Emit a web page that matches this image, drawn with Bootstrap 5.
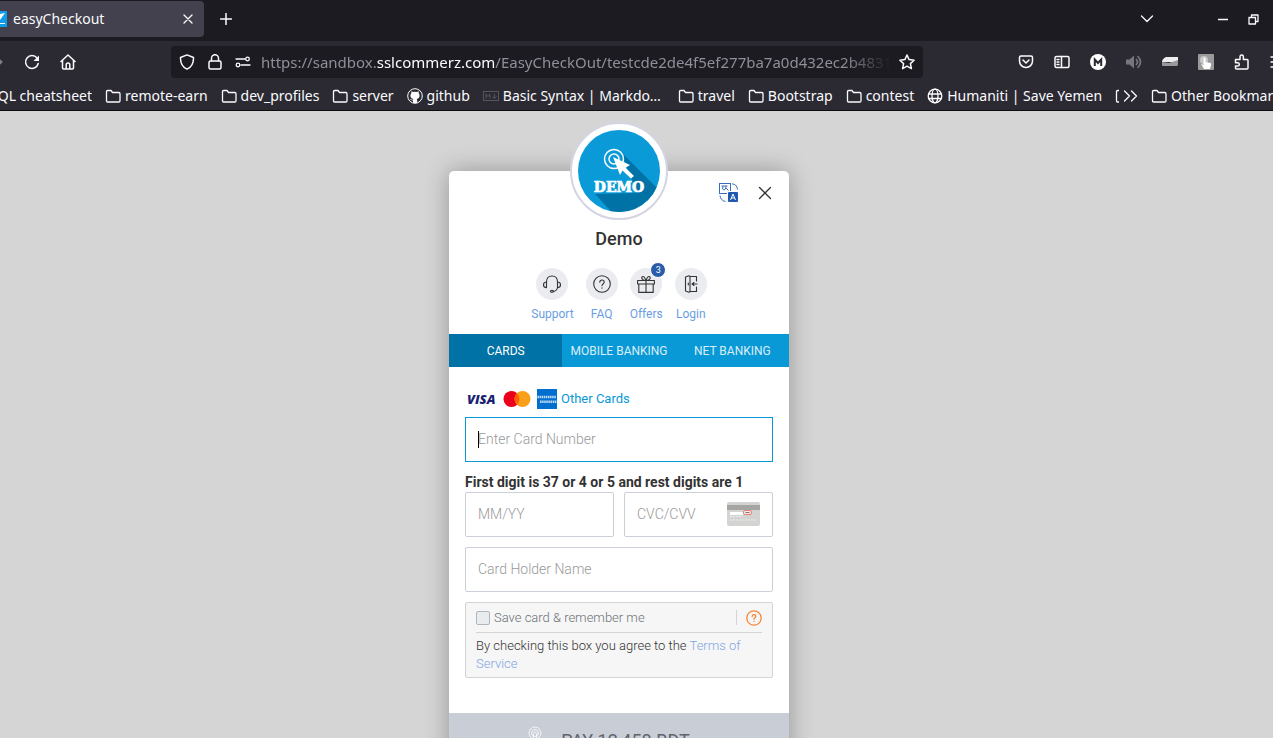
<!DOCTYPE html>
<html lang="en">
<head>
<meta charset="utf-8">
<meta name="viewport" content="width=device-width, initial-scale=1">
<title>easyCheckout</title>
<link href="https://cdn.jsdelivr.net/npm/bootstrap@5.3.0/dist/css/bootstrap.min.css" rel="stylesheet">
<style>
  body { font-family: Roboto, "Liberation Sans", sans-serif; background: #d5d5d5; color: #333; }
  svg { display: block; flex: none; }
  .ico { fill: none; stroke: currentColor; stroke-width: 1.3; stroke-linecap: round; stroke-linejoin: round; }
  .ico.firm { stroke-width: 1.5; }
  .ico.fine { stroke-width: 1.1; }
  .bare { background: none; border: 0; padding: 0; color: inherit; }

  /* browser frame */
  .browser { font-family: "Noto Sans", "Open Sans", sans-serif; font-size: 14px; line-height: 20px; color: #fbfbfe; background: #2b2a33; border-bottom: 1px solid #0c0c0d; }
  .tabstrip { background: #1c1b22; height: 41px; padding-bottom: 3px; }
  .pagetab { width: 204px; height: 36px; background: #42414d; border-radius: 0 4px 4px 0; padding-right: 10px; }
  .pagetab span { margin-left: 6px; }
  .winctl { padding-right: 14px; }
  .toolbar { height: 41px; }
  .tool { width: 36px; height: 32px; display: flex; align-items: center; justify-content: center; }
  .tools-start { width: 86px; }
  .tools-end { width: 265px; }
  .spacer { width: 85px; }
  .urlbar { height: 32px; background: #1c1b22; border-radius: 4px; padding: 0 8px; }
  .address { font-size: 15px; color: #8f8f9a; padding-left: 2px; -webkit-mask-image: linear-gradient(to left, transparent, #000 48px); mask-image: linear-gradient(to left, transparent, #000 48px); }
  .address b { font-weight: 400; color: #fbfbfe; }
  .bookmarks { height: 28px; gap: 13px; }
  .bookmarks a { color: inherit; text-decoration: none; display: flex; align-items: center; gap: 4px; flex: none; }
  .bookmarks .first { width: 92px; justify-content: flex-end; overflow: hidden; }
  .bookmarks .long { width: 182px; }
  .bookmarks .cut { width: 4px; overflow: hidden; }

  /* checkout */
  .stage { padding: 60px 35px 0 0; }
  .checkout { width: 340px; border-radius: 5px 5px 0 0; box-shadow: 0 0 24px rgba(0,0,0,.3); }
  .merchant { width: 98px; height: 98px; margin-top: -49px; padding: 6px; border: 2px solid #d3d5e2; }
  .corner { top: 12px; right: 15px; gap: 17px; }
  .shop-name { font-size: 18px; line-height: 24px; font-weight: 500; margin: 7px 0 17px; }
  .helplinks { gap: 12px; font-size: 12px; line-height: 16px; }
  .helplinks a { color: #6a9ee2; text-decoration: none; }
  .disc { width: 32px; height: 32px; background: #ebecf0; color: #333; margin-bottom: 6px; }
  .count { top: -6px; right: -4px; width: 16px; height: 16px; background: #2a5caa; border: 1px solid #fff; color: #fff; font-size: 9px; line-height: 14px; }
  .paytabs { margin-top: 12px; background: #0999d6; font-size: 12px; line-height: 32px; }
  .paytabs button { flex: 1 1 0; height: 33px; padding-top: 1px; color: #d9eef8; white-space: nowrap; }
  .paytabs .current { background: #0072a5; color: #fff; }
  .payform { padding: 22px 16px 35px; }
  .brands { height: 20px; font-size: 13px; margin-bottom: 8px; }
  .brands a { color: #0999d6; text-decoration: none; margin-left: 4px; }
  .payform .field { height: 45px; border: 1px solid #cbd0d8; border-radius: 2px; padding: 0 12px 2px; font-size: 14px; font-weight: 300; }
  .payform .field:focus { box-shadow: none; border-color: #0999d6; }
  .payform .field::placeholder { color: #999; opacity: 1; }
  .payform .lit { border-color: #0999d6; border-radius: 0; }
  .payform .holder { margin: 10px 0; }
  .caret { left: 13px; top: 14px; width: 1px; height: 17px; background: #000; }
  .halves { display: grid; grid-template-columns: 1fr 1fr; gap: 10px; }
  .cvvpic { right: 13px; top: 10px; }
  .hint { font-size: 14px; line-height: 20px; font-weight: 700; margin-top: 10px; }
  .save { background: #f6f6f6; border: 1px solid #d4d4d4; border-radius: 2px; padding: 0 10px 4px; font-size: 13px; line-height: 18px; font-weight: 300; }
  .save-top { height: 30px; border-bottom: 1px solid #d4d4d4; margin-bottom: 4px; }
  .save-top label { color: #6c7278; margin-left: 4px; }
  .save .form-check-input { width: 14px; height: 14px; margin: 0; background-color: #e9ecef; border-color: #adb5bd; border-radius: 2px; }
  .divide { width: 1px; height: 15px; background: #d4d4d4; margin-right: 9px; }
  .save a { color: #7fa6e3; text-decoration: none; }
  .pay { height: 54px; background: #c9cdd5; color: #5f646b; font-size: 18px; padding-right: 20px; }
</style>
</head>
<body class="vh-100 overflow-hidden d-flex flex-column">
<header class="browser flex-shrink-0 overflow-hidden">
  <div class="tabstrip d-flex align-items-center">
    <div class="pagetab d-flex align-items-center flex-shrink-0">
      <svg width="7" height="16"><path fill="#0d9bea" d="M0 0h7v16H0z"/><path fill="#fff" d="M0 3l5-1-5 7zM0 12h5v1H0z"/></svg>
      <span class="flex-grow-1">easyCheckout</span>
      <button class="bare" aria-label="Close tab"><svg class="ico" width="12" height="12"><path d="M2 2l8 8M10 2l-8 8"/></svg></button>
    </div>
    <button class="bare ms-3" aria-label="New tab"><svg class="ico firm" width="12" height="12"><path d="M6 .5v11M.5 6h11"/></svg></button>
    <div class="winctl ms-auto d-flex align-items-center">
      <button class="bare me-5" aria-label="List tabs"><svg class="ico" width="14" height="10"><path d="M1.500 2l5.500 5.500L12.500 2"/></svg></button>
      <button class="bare ms-3" aria-label="Minimize"><svg class="ico" width="10" height="10"><path d="M0 5.500h10"/></svg></button>
      <button class="bare ms-3 ps-1" aria-label="Restore"><svg class="ico" width="11" height="11"><path d="M1 3.500h6.500V10H1zM3.500 3V1H10v6.500H8"/></svg></button>
    </div>
  </div>

  <div class="toolbar d-flex align-items-center">
    <div class="tools-start d-flex justify-content-end overflow-hidden flex-shrink-0">
      <button class="bare tool flex-shrink-0" aria-label="Forward"><svg class="ico" width="16" height="16" opacity=".4"><path d="M2 8h12M9 3.500L14 8l-5 4.500"/></svg></button>
      <button class="bare tool flex-shrink-0" aria-label="Reload"><svg class="ico firm" width="16" height="16"><path d="M14.200 9.500A6.400 6.400 0 1 1 13 4"/><path d="M15 1.500V7H9.500z" fill="currentColor" stroke="none"/></svg></button>
      <button class="bare tool flex-shrink-0" aria-label="Home"><svg class="ico firm" width="16" height="16"><path d="M1 7.500L8 1l7 6.500M2.500 6.500V14q0 1 1 1h9q1 0 1-1V6.500M6.200 15v-4.200q0-1.800 1.800-1.800t1.800 1.800V15"/></svg></button>
    </div>
    <div class="spacer flex-shrink-0"></div>
    <div class="urlbar d-flex align-items-center flex-grow-1 overflow-hidden">
      <svg class="ico firm" width="16" height="16"><path d="M8 .9L14.500 3.500C14.700 9 12.500 13 8 15.200 3.500 13 1.300 9 1.500 3.500z"/></svg>
      <svg class="ico firm ms-2 me-2 px-1" width="24" height="16" viewBox="0 0 16 16"><rect x="2" y="7" width="12" height="8" rx="1.500"/><path d="M4.500 7V4.200a3.500 3.500 0 0 1 7 0V7"/></svg>
      <svg class="ico" width="16" height="16"><path d="M1 5h9M6 11h9"/><circle cx="12.500" cy="5" r="1.800"/><circle cx="3" cy="11" r="1.800"/></svg>
      <div class="address ms-2 me-2 flex-grow-1 text-nowrap overflow-hidden">https://sandbox.<b>sslcommerz.com</b>/EasyCheckOut/testcde2de4f5ef277ba7a0d432ec2b4831</div>
      <svg class="ico firm" width="16" height="16"><path d="M8 1l2.100 4.600 5 .6-3.700 3.400 1 5L8 12.200 3.600 14.600l1-5L.9 6.200l5-.6z"/></svg>
    </div>
    <div class="spacer flex-shrink-0"></div>
    <div class="tools-end d-flex overflow-hidden flex-shrink-0">
      <button class="bare tool flex-shrink-0" aria-label="Pocket"><svg class="ico firm" width="16" height="16"><path d="M3 2h10q1.500 0 1.500 1.500v3.500a6.500 6.500 0 0 1-13 0V3.500Q1.500 2 3 2zM5 6l3 3 3-3"/></svg></button>
      <button class="bare tool flex-shrink-0" aria-label="Sidebar"><svg class="ico firm" width="16" height="16"><rect x="1" y="2.500" width="14" height="11" rx="1.500"/><path d="M7.500 2.500v11M3 5.500h2M3 8h2M3 10.500h2"/></svg></button>
      <button class="bare tool flex-shrink-0" aria-label="Mail"><svg width="16" height="16"><circle cx="8" cy="8" r="8" fill="#fff"/><path fill="none" stroke="#2b2a33" stroke-width="2" d="M4.800 12V5.500L8 9l3.200-3.500V12"/></svg></button>
      <button class="bare tool flex-shrink-0" aria-label="Sound"><svg width="18" height="16" fill="#77767c"><path d="M1 5.500h3.500L9 1.500v13l-4.500-4H1z"/><path d="M11 5q3 3 0 6M12.500 2q6 6 0 12" fill="none" stroke="#77767c" stroke-width="1.700"/></svg></button>
      <button class="bare tool flex-shrink-0" aria-label="Eraser"><svg width="16" height="16"><path fill="#eee" d="M4 3h12v5H0q0-3 4-5z"/><path fill="#999" d="M0 8l7 1 9-3v4q0 2-1 2H1q-1 0-1-1z"/></svg></button>
      <button class="bare tool flex-shrink-0" aria-label="Touch"><svg width="16" height="16"><rect width="16" height="16" rx="1" fill="#9a9a9a"/><circle cx="6" cy="6" r="4" fill="#c8c8c8"/><path fill="#fff" d="M5.500 4q1-1 2 0v4l5 1q1 .5.500 2l-1 4H6l-3-5 2.500 1z"/></svg></button>
      <button class="bare tool flex-shrink-0" aria-label="Extensions"><svg class="ico firm" width="16" height="16"><path d="M1.500 5.500H6V2.700a1.700 1.700 0 0 1 3.400 0v2.800h3.800q.8 0 .8.800V14q0 1-1 1H2.500q-1 0-1-1v-2h2.200a1.600 1.600 0 0 0 0-3.200H1.500z"/></svg></button>
      <button class="bare tool flex-shrink-0" aria-label="Menu"><svg class="ico" width="16" height="16"><path d="M1 3h14M1 8h14M1 13h14"/></svg></button>
    </div>
  </div>

  <svg class="d-none"><symbol id="folder" viewBox="0 0 16 16"><path d="M1.500 12.800V3.700q0-1.200 1.200-1.200H6l1.500 2h6.300Q15 4.500 15 5.700v7.100q0 1.200-1.200 1.200H2.700q-1.200 0-1.200-1.200z"/></symbol></svg>
  <nav class="bookmarks d-flex align-items-center text-nowrap overflow-hidden" aria-label="Bookmarks">
    <a class="first" href="#">SQL cheatsheet</a>
    <a href="#"><svg class="ico" width="16" height="16"><use href="#folder"/></svg>remote-earn</a>
    <a href="#"><svg class="ico" width="16" height="16"><use href="#folder"/></svg>dev_profiles</a>
    <a href="#"><svg class="ico" width="16" height="16"><use href="#folder"/></svg>server</a>
    <a href="#"><svg width="16" height="16"><circle cx="8" cy="8" r="7.300" fill="#2b2a33" stroke="#fbfbfe"/><path fill="#fbfbfe" d="M6 15v-2.500c-2 .3-2.300-1-3-1.500 1.500-.2 1.500 1 3 .8l.3-.9C4 10.500 3.200 9 3.500 7q.1-1 .8-1.700V3.200L6.300 4q1.700-.4 3.400 0l2-.8v2.100q.7.700.8 1.700c.3 2-.5 3.500-2.800 3.900q.5.600.5 1.600V15z"/></svg>github</a>
    <a class="long" href="#"><svg width="16" height="16" fill="none" stroke="#55545c"><rect x=".5" y="3.500" width="15" height="9"/><path d="M3 10.500V6l2 2.500L7 6v4.500M11.500 6v4M9.500 8.500l2 2 2-2"/></svg><span class="text-truncate">Basic Syntax | Markdown Guide</span></a>
    <a href="#"><svg class="ico" width="16" height="16"><use href="#folder"/></svg>travel</a>
    <a href="#"><svg class="ico" width="16" height="16"><use href="#folder"/></svg>Bootstrap</a>
    <a href="#"><svg class="ico" width="16" height="16"><use href="#folder"/></svg>contest</a>
    <a href="#"><svg class="ico" width="16" height="16"><circle cx="8" cy="8" r="6.800"/><ellipse cx="8" cy="8" rx="3" ry="6.800"/><path d="M1.500 6h13M1.500 10.500h13"/></svg>Humaniti | Save Yemen</a>
    <div class="d-flex align-items-center gap-1">
      <a class="cut" href="#" aria-label="More"><svg class="ico" width="16" height="16"><use href="#folder"/></svg></a>
      <button class="bare" aria-label="Show more bookmarks"><svg class="ico" width="15" height="12"><path d="M1.500 1l5 5-5 5M8.500 1l5 5-5 5"/></svg></button>
    </div>
    <a href="#"><svg class="ico" width="16" height="16"><use href="#folder"/></svg>Other Bookmarks</a>
  </nav>
</header>

<main class="stage flex-grow-1 overflow-hidden">
  <div class="checkout bg-white mx-auto position-relative">
    <div class="corner position-absolute d-flex align-items-center">
      <button class="bare" aria-label="Language"><svg width="20" height="20" fill="none" stroke="#3b6db8"><rect x=".5" y=".5" width="11" height="10"/><path d="M2.500 3h6M4 3q-1.500 4 1 4 2 0 2-4M7 5l2.500 2.500M13 .8q5 .5 5.500 5.700M1 12.500q.5 5 5.500 6"/><rect x="8.500" y="8.500" width="11" height="11" rx="1.500" fill="#1f58ae" stroke="#fff"/><path stroke="#fff" d="M11.500 17l2.500-6 2.500 6M12.300 15h3.400"/></svg></button>
      <button class="bare" aria-label="Close"><svg class="ico" width="18" height="18"><path d="M3.500 3.500l11 11M14.500 3.500l-11 11"/></svg></button>
    </div>
    <div class="d-flex flex-column align-items-center">
      <div class="merchant bg-white rounded-circle">
        <svg width="82" height="82" viewBox="0 0 82 82">
          <clipPath id="round"><circle cx="41" cy="41" r="41"/></clipPath>
          <g clip-path="url(#round)">
            <path fill="#0a9ad7" d="M0 0h82v82H0z"/>
            <path fill="#0172a6" d="M43 22l43 43v25H41L17 64l42-1z"/>
            <circle cx="36" cy="29" r="9.500" fill="none" stroke="#fff" stroke-width="1.500"/>
            <circle cx="36" cy="29" r="5" fill="none" stroke="#fff" stroke-width="1.500"/>
            <path fill="#fff" d="M35 27l17 8-4.500 2.800 8.500 8.200-3 2.500-8.500-8L42 45z"/>
            <text x="41" y="62" text-anchor="middle" font-family="DejaVu Serif, serif" font-weight="700" font-size="14" fill="#fff" stroke="#fff" stroke-width=".7">DEMO</text>
          </g>
        </svg>
      </div>
      <h1 class="shop-name">Demo</h1>
      <div class="helplinks d-flex text-center">
        <a href="#" class="d-flex flex-column align-items-center"><span class="disc rounded-circle d-flex align-items-center justify-content-center"><svg class="ico fine" width="18" height="18"><path d="M3.500 7q0-6 5.500-6t5.500 6M3.500 7q-3 0-3 2.800t3 2.800zM14.500 7q3 0 3 2.800t-3 2.800zM14.500 12.500q-.5 3.500-4.500 4"/><ellipse cx="9" cy="16.300" rx="1.600" ry="1"/></svg></span>Support</a>
        <a href="#" class="d-flex flex-column align-items-center"><span class="disc rounded-circle d-flex align-items-center justify-content-center"><svg class="ico fine" width="18" height="18"><circle cx="9" cy="9" r="8.300"/><path d="M6.800 7.200Q6.800 5 9 5t2.200 2q0 1.200-1.200 2-1 .7-1 1.800M9 12.900v.3"/></svg></span>FAQ</a>
        <a href="#" class="d-flex flex-column align-items-center"><span class="disc rounded-circle d-flex align-items-center justify-content-center position-relative"><svg class="ico fine" width="18" height="18"><path d="M.6 5.500h16.800V9H.6zM1.800 9v8.400h14.400V9M9 5.500v12M9 5.500Q4 5 5 2q2-2 4 3.500Q11 0 13 2q1 3-4 3.500"/></svg><span class="count position-absolute rounded-circle">3</span></span>Offers</a>
        <a href="#" class="d-flex flex-column align-items-center"><span class="disc rounded-circle d-flex align-items-center justify-content-center"><svg class="ico fine" width="18" height="18"><path d="M3.500 2L7 .8q1 0 1 1v14.400q0 1-1 1L3.500 16zM8 1.500h6.500V6M8 16.500h6.500V12M10 9h5M12 7.500L10 9l2 1.500M6.300 8v2"/></svg></span>Login</a>
      </div>
    </div>
    <div class="paytabs d-flex">
      <button class="bare current">CARDS</button>
      <button class="bare">MOBILE BANKING</button>
      <button class="bare">NET BANKING</button>
    </div>
    <form class="payform">
      <div class="brands d-flex align-items-center">
        <svg width="92" height="20" viewBox="0 0 92 20" aria-label="Visa, Mastercard, American Express">
          <text x="2" y="15" font-family="Open Sans, sans-serif" font-weight="800" font-style="italic" font-size="13" fill="#1a1f71">VISA</text>
          <circle cx="46.500" cy="10" r="8" fill="#eb001b"/><circle cx="57.500" cy="10" r="8" fill="#f9a01b"/><path fill="#ff5f00" d="M52 4.200a8 8 0 0 1 0 11.600 8 8 0 0 1 0-11.600z"/>
          <path fill="#016fd0" d="M72 0h20v20H72z"/>
          <path stroke="#fff" stroke-width="2.600" stroke-dasharray="1.500 .6" opacity=".75" d="M72.500 8H91M75 12.700h17"/>
        </svg>
        <a href="#">Other Cards</a>
      </div>
      <div class="position-relative">
        <input class="form-control field lit" type="text" placeholder="Enter Card Number" aria-label="Card number">
        <span class="caret position-absolute"></span>
      </div>
      <div class="hint">First digit is 37 or 4 or 5 and rest digits are 1</div>
      <div class="halves">
        <input class="form-control field" type="text" placeholder="MM/YY" aria-label="Expiry date">
        <div class="position-relative">
          <input class="form-control field" type="text" placeholder="CVC/CVV" aria-label="Security code">
          <svg class="cvvpic position-absolute" width="33" height="24"><rect width="33" height="24" rx="2" fill="#d3d3d1"/><path fill="#a5a5a3" d="M0 3h33v5H0z"/><path fill="#fff" d="M3 10h13v3H3z"/><rect x="16.500" y="8.500" width="8" height="4" rx="1.500" fill="#eee" stroke="#ef7b75"/><path stroke="#777" d="M18.500 10.500h4"/><path stroke="#eee" stroke-dasharray="2 1" d="M3 14.500h13M3 18h27"/></svg>
        </div>
      </div>
      <input class="form-control field holder" type="text" placeholder="Card Holder Name" aria-label="Card holder name">
      <div class="save">
        <div class="save-top d-flex align-items-center">
          <input class="form-check-input" type="checkbox" id="remember">
          <label class="flex-grow-1" for="remember">Save card &amp; remember me</label>
          <span class="divide"></span>
          <svg class="ico" width="16" height="16" color="#f58634"><circle cx="8" cy="8" r="7.200"/><path d="M6.200 6.500Q6.200 4.700 8 4.700t1.800 1.600Q9.800 7.300 8.700 8 8 8.500 8 9.300M8 11.300v.1"/></svg>
        </div>
        By checking this box you agree to the <a href="#">Terms of Service</a>
      </div>
    </form>
    <button class="bare pay w-100 d-flex align-items-center justify-content-center" type="submit">
      <svg class="me-3" width="17" height="28" fill="none" stroke="#fff" opacity=".8"><circle cx="7" cy="7" r="6"/><circle cx="7" cy="7" r="3.500"/><path d="M5.500 18V7.500q0-1.500 1.500-1.500t1.500 1.500V13l7 2v5l-2 6h-6l-5-8z"/></svg>
      PAY 12,450 BDT
    </button>
  </div>
</main>
<script src="https://cdn.jsdelivr.net/npm/bootstrap@5.3.0/dist/js/bootstrap.bundle.min.js"></script>
</body>
</html>
